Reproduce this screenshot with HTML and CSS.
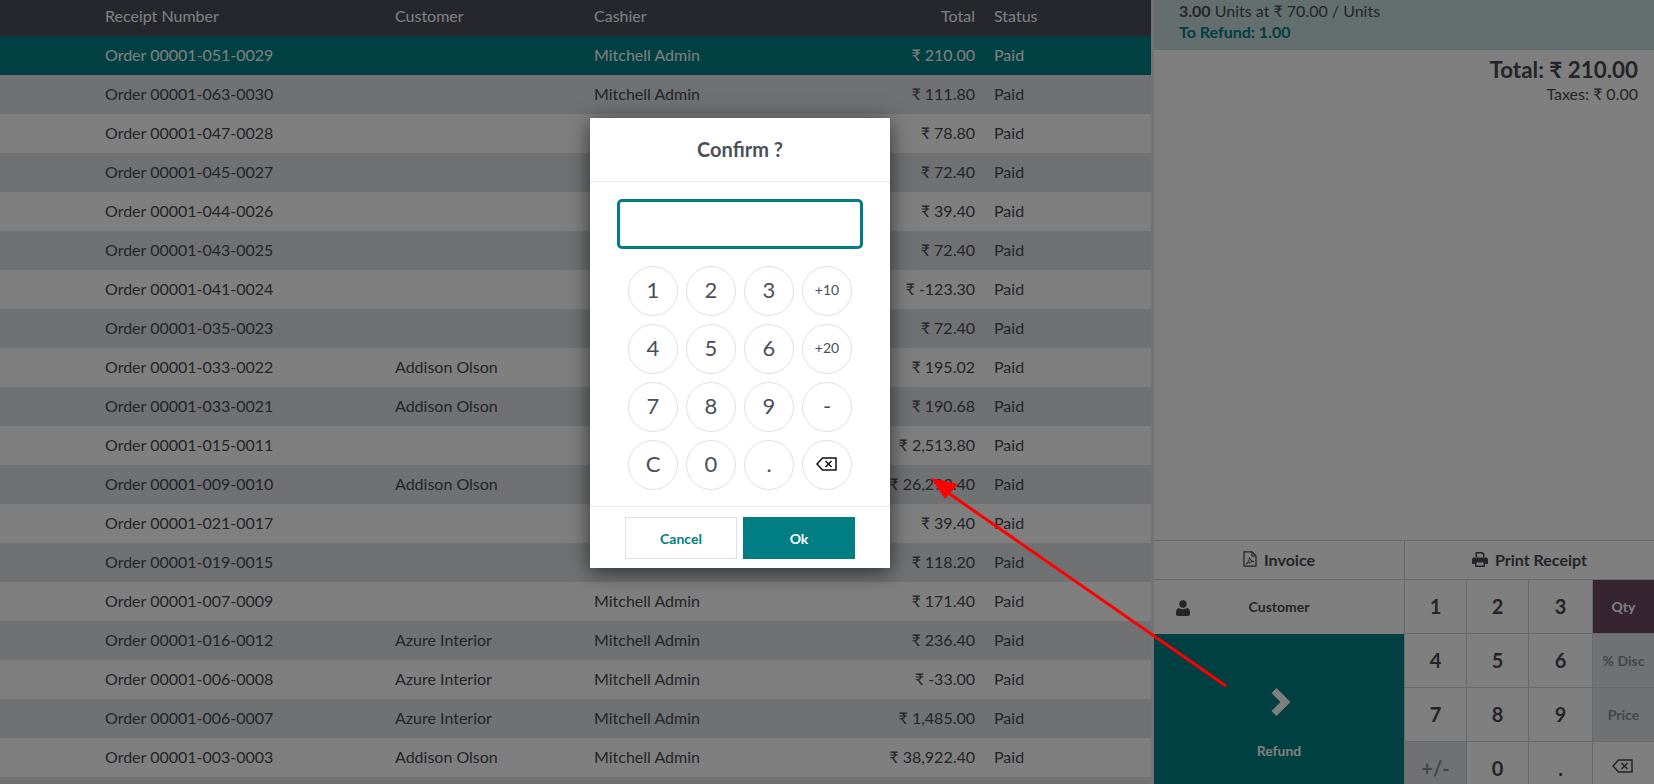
FILE: index.html
```html
<!DOCTYPE html>
<html lang="en">
<head>
    <meta charset="UTF-8">
    <meta name="viewport" content="width=device-width, initial-scale=1.0">
    <title>Point of Sale</title>
    <link rel="stylesheet" href="styles.css">
</head>
<body>
    <div class="screen">
        <div class="orders">
            <div class="row head">
                <span>Receipt Number</span><span>Customer</span><span>Cashier</span><span class="total">Total</span><span>Status</span>
            </div>
            <div class="row selected"><span>Order 00001-051-0029</span><span></span><span>Mitchell Admin</span><span class="total">₹ 210.00</span><span>Paid</span></div>
            <div class="row"><span>Order 00001-063-0030</span><span></span><span>Mitchell Admin</span><span class="total">₹ 111.80</span><span>Paid</span></div>
            <div class="row"><span>Order 00001-047-0028</span><span></span><span></span><span class="total">₹ 78.80</span><span>Paid</span></div>
            <div class="row"><span>Order 00001-045-0027</span><span></span><span></span><span class="total">₹ 72.40</span><span>Paid</span></div>
            <div class="row"><span>Order 00001-044-0026</span><span></span><span></span><span class="total">₹ 39.40</span><span>Paid</span></div>
            <div class="row"><span>Order 00001-043-0025</span><span></span><span></span><span class="total">₹ 72.40</span><span>Paid</span></div>
            <div class="row"><span>Order 00001-041-0024</span><span></span><span></span><span class="total">₹ -123.30</span><span>Paid</span></div>
            <div class="row"><span>Order 00001-035-0023</span><span></span><span></span><span class="total">₹ 72.40</span><span>Paid</span></div>
            <div class="row"><span>Order 00001-033-0022</span><span>Addison Olson</span><span></span><span class="total">₹ 195.02</span><span>Paid</span></div>
            <div class="row"><span>Order 00001-033-0021</span><span>Addison Olson</span><span></span><span class="total">₹ 190.68</span><span>Paid</span></div>
            <div class="row"><span>Order 00001-015-0011</span><span></span><span></span><span class="total">₹ 2,513.80</span><span>Paid</span></div>
            <div class="row"><span>Order 00001-009-0010</span><span>Addison Olson</span><span></span><span class="total">₹ 26,293.40</span><span>Paid</span></div>
            <div class="row"><span>Order 00001-021-0017</span><span></span><span></span><span class="total">₹ 39.40</span><span>Paid</span></div>
            <div class="row"><span>Order 00001-019-0015</span><span></span><span></span><span class="total">₹ 118.20</span><span>Paid</span></div>
            <div class="row"><span>Order 00001-007-0009</span><span></span><span>Mitchell Admin</span><span class="total">₹ 171.40</span><span>Paid</span></div>
            <div class="row"><span>Order 00001-016-0012</span><span>Azure Interior</span><span>Mitchell Admin</span><span class="total">₹ 236.40</span><span>Paid</span></div>
            <div class="row"><span>Order 00001-006-0008</span><span>Azure Interior</span><span>Mitchell Admin</span><span class="total">₹ -33.00</span><span>Paid</span></div>
            <div class="row"><span>Order 00001-006-0007</span><span>Azure Interior</span><span>Mitchell Admin</span><span class="total">₹ 1,485.00</span><span>Paid</span></div>
            <div class="row"><span>Order 00001-003-0003</span><span>Addison Olson</span><span>Mitchell Admin</span><span class="total">₹ 38,922.40</span><span>Paid</span></div>
            <div class="row"></div>
        </div>

        <div class="side">
            <div class="orderline">
                <div><b>3.00</b> Units at ₹ 70.00 / Units</div>
                <div class="refund-qty">To Refund: 1.00</div>
            </div>
            <div class="summary">
                <div class="grand">Total: ₹ 210.00</div>
                <div class="taxes">Taxes: ₹ 0.00</div>
            </div>
            <div class="pad">
                <div class="pad-top">
                    <div class="pad-link">
                        <svg class="icon" width="14" height="16" viewBox="0 0 14 16" fill="none" stroke="currentColor" stroke-width="1.2"><path d="M1 .8h8l4 4v10.400H1z"/><path d="M9 .8v4h4"/><path d="M3 13c2-1 3.500-4 3.500-6.500 0 2 2 3.800 4.500 4-2.500 0-5.500 1-8 2.500z" stroke-width=".9"/></svg>
                        Invoice
                    </div>
                    <div class="pad-link">
                        <svg class="icon" width="16" height="15" viewBox="0 0 16 15" fill="currentColor"><path d="M3.500 0h7l2 2v3h-1.500V2.800L9.800 1.500H5V5H3.500z"/><path d="M2 5.500h12a2 2 0 0 1 2 2V12h-3v3H3v-3H0V7.500a2 2 0 0 1 2-2zm2.500 5v3h7v-3z"/></svg>
                        Print Receipt
                    </div>
                </div>
                <div class="pad-main">
                    <div class="actions">
                        <div class="customer">
                            <svg class="user" width="14" height="16" viewBox="0 0 14 16" fill="currentColor"><circle cx="7" cy="4" r="3.700"/><path d="M3 8c1 .8 2.500 1.200 4 1.200S10 8.800 11 8c2 .3 3 2 3 4.500V14a2 2 0 0 1-2 2H2a2 2 0 0 1-2-2v-1.500C0 10 1 8.300 3 8z"/></svg>
                            <span>Customer</span>
                        </div>
                        <div class="refund">
                            <svg width="20" height="30" viewBox="0 0 20 30" fill="currentColor"><path d="M5.500 1 19.500 15 5.500 29 .5 24 9.500 15 .5 6z"/></svg>
                            <span>Refund</span>
                        </div>
                    </div>
                    <div class="numpad">
                        <div class="key">1</div><div class="key">2</div><div class="key">3</div><div class="key mode active">Qty</div>
                        <div class="key">4</div><div class="key">5</div><div class="key">6</div><div class="key mode">% Disc</div>
                        <div class="key">7</div><div class="key">8</div><div class="key">9</div><div class="key mode">Price</div>
                        <div class="key sign">+/-</div><div class="key">0</div><div class="key">.</div>
                        <div class="key">
                            <svg class="key-back" width="21" height="14" viewBox="0 0 21 14" fill="none" stroke="currentColor" stroke-width="1.500"><path d="M20 1H6.500L1 7l5.500 6H20z"/><path d="m9.500 4 6 6m0-6-6 6"/></svg>
                        </div>
                    </div>
                </div>
            </div>
        </div>

        <div class="backdrop"></div>

        <div class="dialog">
            <header class="dialog-title">Confirm ?</header>
            <div class="dialog-body">
                <div class="amount"></div>
                <div class="keys">
                    <div class="circle">1</div><div class="circle">2</div><div class="circle">3</div><div class="circle small">+10</div>
                    <div class="circle">4</div><div class="circle">5</div><div class="circle">6</div><div class="circle small">+20</div>
                    <div class="circle">7</div><div class="circle">8</div><div class="circle">9</div><div class="circle">-</div>
                    <div class="circle">C</div><div class="circle">0</div><div class="circle">.</div>
                    <div class="circle back">
                        <svg width="21" height="14" viewBox="0 0 21 14" fill="none" stroke="currentColor" stroke-width="1.500"><path d="M20 1H6.500L1 7l5.500 6H20z"/><path d="m9.500 4 6 6m0-6-6 6"/></svg>
                    </div>
                </div>
            </div>
            <footer class="dialog-foot">
                <button type="button" class="btn cancel">Cancel</button>
                <button type="button" class="btn ok">Ok</button>
            </footer>
        </div>

        <!-- annotation drawn over the screenshot -->
        <svg class="arrow" width="1654" height="784" viewBox="0 0 1654 784">
            <path d="M1226 686 944 490" stroke="#f00" stroke-width="3" fill="none"/>
            <path d="M931 478 958 484 945 499z" fill="#f00"/>
        </svg>
    </div>
</body>
</html>
```

FILE: styles.css
```css
* {
    box-sizing: border-box;
}
body {
    margin: 0;
    font-family: Lato, "Open Sans", sans-serif;
    font-size: 16px;
    color: #444;
    background-color: #fff;
}
.screen {
    position: relative;
    display: flex;
    width: 1654px;
    height: 784px;
    overflow: hidden;
}

/* order list */
.orders {
    flex: none;
    width: 1154px;
    border-right: 3px solid #e6e6e6;
}
.row {
    display: grid;
    grid-template-columns: 290px 199px 300px 81px 1fr;
    align-items: center;
    height: 39px;
    padding-left: 105px;
    padding-bottom: 2px;
    background-color: #fff;
    color: #4a4a52;
    white-space: nowrap;
}
.row:nth-child(odd) {
    background-color: #dee2e6;
}
.row .total {
    display: flex;
    justify-content: flex-end;
}
.row span:last-child {
    padding-left: 19px;
}
.row.head {
    height: 36px;
    padding-bottom: 5px;
    background-color: #4c4e58;
    color: #fff;
}
.row.selected {
    background-color: #017e84;
    color: #fff;
}

/* right panel */
.side {
    flex: 1;
    min-width: 0;
    background-color: #fff;
}
.orderline {
    height: 50px;
    padding-left: 25px;
    line-height: 21px;
    background-color: #cadcde;
    color: #4a4a52;
}
.refund-qty {
    font-weight: bold;
    color: #017e84;
}
.summary {
    height: 490px;
    padding: 6px 16px 0 0;
    text-align: right;
    color: #4a4a52;
}
.grand {
    font-size: 22.4px;
    font-weight: bold;
    line-height: 28px;
}
.taxes {
    line-height: 19px;
}
.pad {
    border-top: 1px solid #ced4da;
    color: #4a4a52;
}
.pad-top {
    display: grid;
    grid-template-columns: 250px 1fr;
    height: 39px;
    border-bottom: 1px solid #ced4da;
}
.pad-link {
    display: flex;
    align-items: center;
    justify-content: center;
    gap: 7px;
    padding-bottom: 2px;
    font-weight: bold;
}
.pad-link + .pad-link {
    border-left: 1px solid #ced4da;
}
.pad-main {
    display: grid;
    grid-template-columns: 250px 1fr;
}
.customer {
    position: relative;
    display: flex;
    align-items: center;
    justify-content: center;
    height: 54px;
    padding-bottom: 2px;
    font-size: 14px;
    font-weight: bold;
}
.user {
    position: absolute;
    left: 22px;
    top: 20px;
}
.refund {
    display: flex;
    flex-direction: column;
    align-items: center;
    height: 162px;
    padding: 53px 0 0 4px;
    gap: 25px;
    background-color: #017e84;
    color: #fff;
    font-size: 14px;
    font-weight: bold;
}
.refund span {
    margin-left: -4px;
}
.numpad {
    display: grid;
    grid-template-columns: 62px 62px 64px 62px;
    grid-auto-rows: 54px;
}
.key {
    display: flex;
    align-items: center;
    justify-content: center;
    padding-bottom: 2px;
    border-left: 1px solid #ced4da;
    border-bottom: 1px solid #ced4da;
    font-size: 20px;
    font-weight: bold;
}
.key.mode {
    padding-bottom: 0;
    font-size: 14px;
    background-color: #dee2e6;
    color: #8a8d92;
}
.key.mode.active {
    background-color: #6d4a63;
    color: #fff;
}
.key.sign {
    background-color: #dee2e6;
    color: #8a8d92;
}
.key-back {
    margin: 0 3px 3px 0;
}

/* dim layer */
.backdrop {
    position: absolute;
    inset: 0;
    background-color: rgba(0, 0, 0, 0.5);
}

/* popup */
.dialog {
    position: absolute;
    left: 590px;
    top: 118px;
    width: 300px;
    height: 450px;
    background-color: #fff;
    box-shadow: 0 4px 20px rgba(0, 0, 0, 0.6);
}
.dialog-title {
    height: 64px;
    border-bottom: 1px solid #e7e9ed;
    font-size: 20px;
    font-weight: bold;
    line-height: 63px;
    text-align: center;
    color: #4a4f59;
}
.dialog-body {
    height: 325px;
    padding-top: 17px;
    border-bottom: 1px solid #e7e9ed;
}
.amount {
    width: 246px;
    height: 50px;
    margin: 0 auto 17px;
    border: 3px solid #017e84;
    border-radius: 5px;
}
.keys {
    display: grid;
    grid-template-columns: repeat(4, 50px);
    grid-auto-rows: 50px;
    gap: 8px;
    justify-content: center;
}
.circle {
    display: flex;
    align-items: center;
    justify-content: center;
    padding-bottom: 3px;
    border: 1px solid #e0e0e4;
    border-radius: 50%;
    font-size: 22px;
    color: #4a4f59;
}
.circle.small {
    font-size: 14px;
}
.circle.back {
    color: #111;
    padding: 0 2px 3px 0;
}
.dialog-foot {
    display: flex;
    justify-content: center;
    gap: 6px;
    padding-top: 10px;
}
.btn {
    width: 112px;
    height: 42px;
    border: 1px solid #017e84;
    font-family: inherit;
    font-size: 14px;
    font-weight: bold;
    background-color: #017e84;
    color: #fff;
}
.btn.cancel {
    border-color: #e0e0e4;
    background-color: #fff;
    color: #017e84;
}

.arrow {
    position: absolute;
    inset: 0;
    pointer-events: none;
}
```
